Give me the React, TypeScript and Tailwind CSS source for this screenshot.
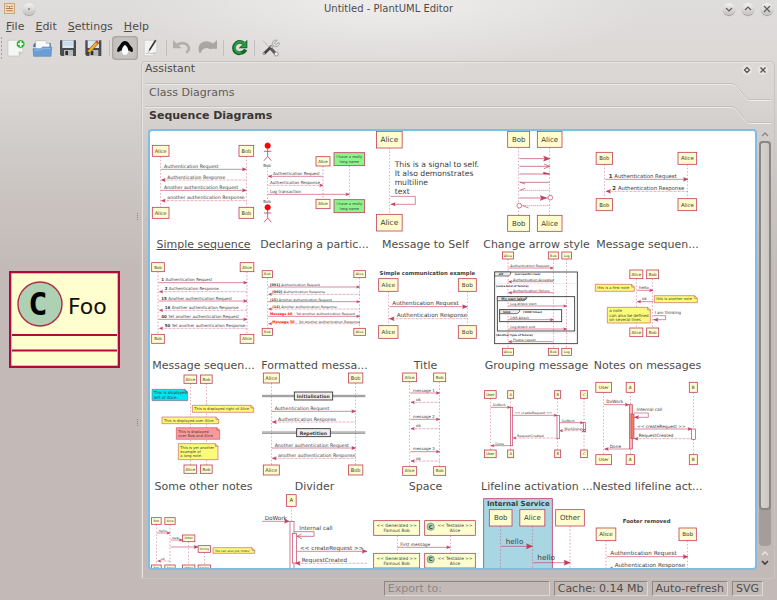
import type { ReactNode } from 'react';

const LINE = '#c23a5e';
const BOX = '#fefece';

interface BoxProps {
  cx: number;
  y: number;
  w: number;
  h: number;
  t: string | string[];
  s: number;
  fill?: string;
}

// A participant head or foot, text centred on cx
function Box({ cx, y, w, h, t, s, fill = BOX }: BoxProps) {
  const lines = Array.isArray(t) ? t : [t];
  const first = y + h / 2 + s * 0.36 - ((lines.length - 1) * s * 1.16) / 2;
  return (
    <g>
      <rect x={cx - w / 2} y={y} width={w} height={h} fill={fill} stroke={LINE} strokeWidth={2.4} />
      {lines.map((l, i) => (
        <text key={l} x={cx} y={first + i * s * 1.16} fontSize={s} textAnchor="middle">
          {l}
        </text>
      ))}
    </g>
  );
}

function Life({ x, a, b }: { x: number; a: number; b: number }) {
  return <path d={`M${x} ${a}V${b}`} stroke={LINE} strokeWidth={1.8} strokeDasharray="5 5" opacity={0.75} />;
}

interface PartProps {
  cx: number;
  w: number;
  h: number;
  top: number;
  bot?: number;
  t: string | string[];
  s: number;
  fill?: string;
}

function Part({ cx, w, h, top, bot, t, s, fill }: PartProps) {
  return (
    <g>
      <Life x={cx} a={top + h} b={bot ?? 610} />
      <Box cx={cx} y={top} w={w} h={h} t={t} s={s} fill={fill} />
      {bot !== undefined && <Box cx={cx} y={bot} w={w} h={h} t={t} s={s} fill={fill} />}
    </g>
  );
}

interface MsgProps {
  a: number;
  b: number;
  y: number;
  t?: string;
  n?: string;
  tx?: number;
  s?: number;
  dash?: boolean;
  red?: boolean;
}

function Msg({ a, b, y, t, n, tx = 0, s = 14, dash, red }: MsgProps) {
  const d = b > a ? -1 : 1;
  const k = Math.max(9, s * 0.85);
  return (
    <g>
      <path d={`M${a} ${y}H${b}`} stroke={LINE} strokeWidth={1.8} strokeDasharray={dash ? '2 2' : undefined} />
      <path d={`M${b} ${y}l${d * k} ${-k / 2.4}l${-d * 2} ${k / 2.4}l${d * 2} ${k / 2.4}z`} fill={LINE} stroke={LINE} />
      <text x={tx} y={y - s * 0.32} fontSize={s}>
        {n && (
          <tspan fontWeight="bold" fill={red ? '#f00' : undefined}>
            {n}{' '}
          </tspan>
        )}
        {t}
      </text>
    </g>
  );
}

function Self({ x, y, w, h }: { x: number; y: number; w: number; h: number }) {
  return (
    <g>
      <path d={`M${x} ${y}h${w}v${h}H${x}`} fill="none" stroke={LINE} strokeWidth={1.8} />
      <path d={`M${x} ${y + h}l15 -6l-3 6l3 6z`} fill={LINE} />
    </g>
  );
}

interface NoteProps {
  x: number;
  y: number;
  w: number;
  h: number;
  t: string[];
  s: number;
  fill?: string;
}

function Note({ x, y, w, h, t, s, fill = '#fbfb77' }: NoteProps) {
  return (
    <g>
      <path d={`M${x} ${y}h${w - 8}l8 8v${h - 8}h${-w}z`} fill={fill} stroke={LINE} strokeWidth={1.6} />
      <path d={`M${x + w - 8} ${y}v8h8`} fill="none" stroke={LINE} strokeWidth={1.6} />
      {t.map((l, i) => (
        <text key={l} x={x + 6} y={y + h / 2 + s * 0.36 + (i - (t.length - 1) / 2) * s * 1.16} fontSize={s}>
          {l}
        </text>
      ))}
    </g>
  );
}

function Bar({ x, y, h, w = 9, fill = '#fff' }: { x: number; y: number; h: number; w?: number; fill?: string }) {
  return <rect x={x} y={y} width={w} height={h} fill={fill} stroke={LINE} strokeWidth={2} />;
}

function Actor({ x, y }: { x: number; y: number }) {
  return (
    <g stroke={LINE} strokeWidth={2.4} fill="none">
      <path d={`M${x} ${y + 8}v24M${x - 11} ${y + 17}h22M${x - 11} ${y + 45}l11 -13l11 13`} />
      <circle cx={x} cy={y} r={8} fill="#f00" stroke="#e00020" />
    </g>
  );
}

const simple = (
  <>
    <Part cx={38} w={50} h={33} top={46} bot={232} t="Alice" s={15} />
    <Part cx={295} w={44} h={33} top={46} bot={232} t="Bob" s={15} />
    <Msg a={38} b={295} y={118} t="Authentication Request" tx={48} />
    <Msg a={295} b={40} y={150} t="Authentication Response" tx={58} dash />
    <Msg a={38} b={295} y={181} t="Another authentication Request" tx={48} />
    <Msg a={295} b={40} y={212} t="another authentication Response" tx={58} dash />
  </>
);

const declaring = (
  <>
    <Life x={359} a={112} b={212} />
    <Actor x={359} y={47} />
    <text x={357} y={110} fontSize={12} textAnchor="middle">Bob</text>
    <text x={357} y={220} fontSize={12} textAnchor="middle">Bob</text>
    <Actor x={359} y={232} />
    <Part cx={525} w={42} h={28} top={80} bot={208} t="Alice" s={12} />
    <Part cx={604} w={92} h={39} top={68} bot={209} t={['I have a really', 'long name']} s={11} fill="#8df48b" />
    <Msg a={525} b={361} y={139} t="Authentication Request" tx={375} s={12} />
    <Msg a={359} b={525} y={166} t="Authentication Response" tx={366} s={12} dash />
    <Msg a={359} b={604} y={193} t="Log transaction" tx={366} s={12} />
  </>
);

const toSelf = (
  <>
    <Part cx={64} w={77} h={50} top={4} bot={253} t="Alice" s={22} />
    {['This is a signal to self.', 'It also demonstrates', 'multiline', 'text'].map((l, i) => (
      <text key={l} x={80} y={111 + i * 27} fontSize={23}>{l}</text>
    ))}
    <Self x={68} y={199} w={74} h={24} />
  </>
);

const arrows = (
  <>
    <Part cx={452} w={66} h={48} top={4} bot={256} t="Bob" s={21} />
    <Part cx={545} w={74} h={48} top={4} bot={256} t="Alice" s={21} />
    <g stroke={LINE} strokeWidth={2} fill="none">
      <path d="M454 86H545M454 109H545M454 132H545M454 157H545M454 204H540" />
      <path d="M528 102l17 7l-17 7M456 157l16 5M456 181l16 -6M464 227l18 7" />
      <path d="M454 181H545M460 227H545" strokeDasharray="3 3" />
      <path d="M545 86l-18 -7l4 7l-4 7zM545 132l-18 -5v5zM535 204l-18 -7l4 7l-4 7z" fill={LINE} />
      <circle cx={547} cy={203} r={7} fill="#fff" />
      <circle cx={454} cy={227} r={7} fill="#fff" />
    </g>
  </>
);

const seqNumber = (
  <>
    <Part cx={49} w={49} h={36} top={67} bot={206} t="Bob" s={16} />
    <Part cx={298} w={56} h={36} top={67} bot={206} t="Alice" s={16} />
    <Msg a={52} b={300} y={148} n="1" t="Authentication Request" tx={62} s={16} />
    <Msg a={300} b={54} y={184} n="2" t="Authentication Response" tx={73} s={16} dash />
  </>
);

const seqStep = (
  <>
    <Part cx={30} w={38} h={27} top={38} bot={253} t="Bob" s={12} />
    <Part cx={297} w={41} h={27} top={38} bot={253} t="Alice" s={12} />
    <Msg a={32} b={297} y={98} n="1" t="Authentication Request" tx={40} s={12} />
    <Msg a={297} b={34} y={125} n="2" t="Authentication Response" tx={50} s={12} dash />
    <Msg a={32} b={297} y={153} n="15" t="Another authentication Request" tx={40} s={12} />
    <Msg a={297} b={34} y={181} n="16" t="Another authentication Response" tx={50} s={12} dash />
    <Msg a={32} b={297} y={208} n="40" t="Yet another authentication Request" tx={40} s={12} />
    <Msg a={297} b={34} y={235} n="50" t="Yet another authentication Response" tx={50} s={12} dash />
  </>
);

const formatted = (
  <>
    <Part cx={358} w={31} h={21} top={62} bot={235} t="Bob" s={10} />
    <Part cx={635} w={35} h={21} top={62} bot={235} t="Alice" s={10} />
    <Msg a={360} b={635} y={111} n="[001]" t="Authentication Request" tx={366} s={10} />
    <Msg a={635} b={362} y={133} n="[002]" t="Authentication Response" tx={373} s={10} dash />
    <Msg a={360} b={635} y={155} n="(15)" t="Another authentication Request" tx={366} s={10} />
    <Msg a={635} b={362} y={177} n="(16)" t="Another authentication Response" tx={373} s={10} dash />
    <Msg a={360} b={635} y={199} n="Message 40" tx={366} s={10} red />
    <text x={445} y={196} fontSize={10}>Yet another authentication Request</text>
    <Msg a={635} b={362} y={221} n="Message 50" tx={373} s={10} dash red />
    <text x={452} y={218} fontSize={10}>Yet another authentication Response</text>
  </>
);

const titled = (
  <>
    <text x={178} y={75} fontSize={16} fontWeight="bold" textAnchor="middle">Simple communication example</text>
    <Part cx={61} w={58} h={38} top={86} bot={227} t="Alice" s={17} />
    <Part cx={298} w={54} h={38} top={86} bot={227} t="Bob" s={17} />
    <Msg a={64} b={298} y={170} t="Authentication Request" tx={73} s={17} />
    <Msg a={298} b={64} y={206} t="Authentication Response" tx={86} s={17} dash />
  </>
);

const grouping = (
  <>
    <Part cx={420} w={33} h={21} top={6} bot={295} t="Alice" s={10} />
    <Part cx={556} w={30} h={21} top={6} bot={295} t="Bob" s={10} />
    <Part cx={596} w={29} h={21} top={6} bot={295} t="Log" s={10} />
    <g fill="none" stroke="#333" strokeWidth={2.6}>
      <rect x={380} y={66} width={248} height={215} />
      <rect x={388} y={140} width={232} height={103} />
      <rect x={395} y={179} width={186} height={36} />
      <path d="M380 78h42l6 -6v-6h-48zM388 152h80l8 -6v-6h-88zM395 191h52l8 -6v-6h-60z" fill="#ececec" strokeWidth={2} />
      <path d="M380 101h248M380 249h248" stroke="#888" strokeWidth={1} strokeDasharray="3 3" />
    </g>
    <g fontSize={9} fontWeight="bold">
      <text x={392} y={76}>alt</text>
      <text x={440} y={76} fontSize={8}>[successful case]</text>
      <text x={384} y={110} fontSize={8}>[some kind of failure]</text>
      <text x={400} y={150} fontSize={10}>My own label</text>
      <text x={405} y={189}>loop</text>
      <text x={465} y={189} fontSize={8}>[1000 times]</text>
      <text x={384} y={257} fontSize={8}>[Another type of failure]</text>
    </g>
    <Msg a={421} b={556} y={54} t="Authentication Request" tx={427} s={10} />
    <Msg a={556} b={422} y={95} t="Authentication Accepted" tx={435} s={10} />
    <Msg a={556} b={422} y={128} t="Authentication Failure" tx={435} s={10} />
    <Msg a={421} b={596} y={168} t="Log attack start" tx={427} s={10} />
    <Msg a={421} b={556} y={209} t="DNS Attack" tx={427} s={10} />
    <Msg a={421} b={596} y={237} t="Log attack end" tx={427} s={10} />
    <Msg a={556} b={422} y={275} t="Please repeat" tx={435} s={10} />
  </>
);

const notes = (
  <>
    <Part cx={145} w={39} h={26} top={60} bot={234} t="Alice" s={12} />
    <Part cx={194} w={36} h={26} top={60} bot={234} t="Bob" s={12} />
    <Note x={22} y={103} w={117} h={21} t={['this is a first note']} s={11} />
    <Note x={199} y={137} w={129} h={21} t={['this is another note']} s={11} />
    <Note x={58} y={172} w={129} h={47} t={['a note', 'can also be defined', 'on several lines']} s={12} />
    <Msg a={147} b={195} y={121} t="hello" tx={153} s={12} />
    <Msg a={196} b={148} y={155} t="ok" tx={162} s={12} />
    <text x={200} y={193} fontSize={12}>I am thinking</text>
    <Self x={196} y={197} w={37} h={12} />
  </>
);

const otherNotes = (
  <>
    <Part cx={127} w={38} h={25} top={15} bot={285} t="Alice" s={12} />
    <Part cx={175} w={35} h={25} top={15} bot={285} t="Bob" s={12} />
    <Note x={12} y={58} w={107} h={34} t={['This is displayed', 'left of Alice.']} s={12} fill="#00e5f5" />
    <Note x={133} y={106} w={184} h={21} t={['This is displayed right of Alice.']} s={11} />
    <Note x={42} y={141} w={170} h={20} t={['This is displayed over Alice.']} s={11} />
    <Note x={85} y={173} w={130} h={35} t={[' This is displayed', ' over Bob and Alice.']} s={11} fill="#fa9a9a" />
    <Note x={91} y={221} w={119} h={48} t={['This is yet another', 'example of', 'a long note.']} s={11} />
  </>
);

const divider = (
  <>
    <Part cx={370} w={48} h={30} top={9} bot={285} t="Alice" s={15} />
    <Part cx={623} w={43} h={30} top={9} bot={285} t="Bob" s={15} />
    <path d="M342 76H652M342 80H652M342 186H652M342 190H652" stroke="#444" strokeWidth={1.8} />
    <g fill="#eee" stroke="#333" strokeWidth={2.6}>
      <rect x={439} y={66} width={115} height={24} />
      <rect x={446} y={176} width={101} height={24} />
    </g>
    <g fontSize={14} fontWeight="bold" textAnchor="middle">
      <text x={496} y={84}>Initialisation</text>
      <text x={496} y={194}>Repetition</text>
    </g>
    <Msg a={371} b={623} y={124} t="Authentication Request" tx={380} />
    <Msg a={623} b={373} y={156} t="Authentication Response" tx={390} dash />
    <Msg a={371} b={623} y={234} t="Another authentication Request" tx={380} />
    <Msg a={623} b={373} y={265} t="another authentication Response" tx={390} dash />
  </>
);

const space = (
  <>
    <Part cx={125} w={42} h={26} top={9} bot={290} t="Alice" s={12} />
    <Part cx={215} w={36} h={26} top={9} bot={290} t="Bob" s={12} />
    {[69, 148, 245].map((y, i) => (
      <g key={y}>
        <Msg a={127} b={215} y={y} t={`message ${i + 1}`} tx={135} s={12} />
        <Msg a={215} b={129} y={y + 28} t="ok" tx={144} s={12} dash />
      </g>
    ))}
  </>
);

const lifeline = (
  <>
    <Part cx={367} w={35} h={23} top={62} bot={240} t="User" s={11} />
    <Part cx={428} w={18} h={23} top={62} bot={240} t="A" s={11} />
    <Part cx={569} w={18} h={23} top={62} bot={240} t="B" s={11} />
    <Part cx={648} w={20} h={23} top={62} bot={240} t="C" s={11} />
    <Bar x={427} y={112} h={115} w={7} />
    <Bar x={567} y={136} h={70} w={7} />
    <Bar x={646} y={158} h={26} w={7} />
    <Msg a={368} b={427} y={112} t="DoWork" tx={374} s={10} />
    <Msg a={434} b={567} y={136} t="<< createRequest >>" tx={440} s={10} />
    <Msg a={574} b={646} y={158} t="DoWork" tx={581} s={10} />
    <Msg a={646} b={575} y={182} t="WorkDone" tx={589} s={10} dash />
    <Msg a={567} b={435} y={204} t="RequestCreated" tx={447} s={10} dash />
    <Msg a={427} b={369} y={227} t="Done" tx={382} s={10} />
    <path d="M641 175l12 12M653 175l-12 12" stroke={LINE} strokeWidth={2.6} />
  </>
);

const nested = (
  <>
    <Part cx={47} w={47} h={30} top={37} bot={254} t="User" s={13} />
    <Part cx={127} w={25} h={30} top={37} bot={254} t="A" s={13} />
    <Part cx={316} w={24} h={30} top={37} bot={254} t="B" s={13} />
    <Bar x={124} y={104} h={133} fill="#ffb9b0" />
    <Bar x={129} y={132} h={74} fill="#e9835e" />
    <Bar x={311} y={177} h={31} w={11} />
    <Msg a={48} b={123} y={104} t="DoWork" tx={55} s={13} />
    <text x={146} y={124} fontSize={13}>Internal call</text>
    <Self x={138} y={129} w={43} h={13} />
    <Msg a={138} b={311} y={177} t="<< createRequest >>" tx={147} s={13} />
    <Msg a={311} b={139} y={206} t="RequestCreated" tx={152} s={13} dash />
    <Msg a={123} b={50} y={237} t="Done" tx={65} s={13} />
  </>
);

const creation = (
  <>
    <Part cx={25} w={29} h={20} top={443} bot={585} t="Bob" s={9} />
    <Part cx={66} w={31} h={20} top={443} bot={585} t="Alice" s={9} />
    <Part cx={122} w={37} h={20} top={495} bot={585} t="Other" s={9} />
    <Part cx={169} w={37} h={20} top={527} bot={585} t="String" s={9} />
    <Note x={195} y={533} w={125} h={17} t={['You can also put notes!']} s={9} />
    <Msg a={27} b={66} y={489} t="hello" tx={32} s={10} />
    <Msg a={68} b={103} y={510} t="new" tx={72} s={10} />
    <Msg a={68} b={150} y={531} />
    <Msg a={66} b={29} y={573} t="ok" tx={39} s={10} dash />
  </>
);

const internalCall = (
  <>
    <Part cx={430} w={29} h={35} top={374} t="A" s={16} />
    <Bar x={426} y={454} h={160} w={12} />
    <Bar x={433} y={490} h={89} w={12} />
    <Msg a={342} b={424} y={454} t="DoWork" tx={350} s={17} />
    <text x={454} y={479} fontSize={17}>Internal call</text>
    <path d="M438 485H498V499H447M461 492l-14 7l14 7" fill="none" stroke={LINE} strokeWidth={2} />
    <Msg a={447} b={657} y={544} t="<< createRequest >>" tx={456} s={17} />
    <Msg a={657} b={442} y={580} t="RequestCreated" tx={461} s={17} dash />
  </>
);

const stereotypes = (
  <>
    <Life x={88} a={497} b={550} />
    <Life x={247} a={497} b={550} />
    {[452, 550].map((y) => (
      <g key={y}>
        <Box cx={86} y={y} w={138} h={44} t={['<< Generated >>', 'Famous Bob']} s={13} />
        <Box cx={246} y={y} w={152} h={44} t="" s={13} />
        <text x={261} y={y + 20} fontSize={13} textAnchor="middle">{'<< Testable >>'}</text>
        <text x={261} y={y + 35} fontSize={13} textAnchor="middle">Alice</text>
        <circle cx={188} cy={y + 18} r={11} fill="#add1b2" stroke="#555" strokeWidth={1.5} />
        <text x={188} y={y + 24} fontSize={16} fontWeight="bold" textAnchor="middle">C</text>
      </g>
    ))}
    <Msg a={88} b={247} y={532} t="First message" tx={97} s={13} />
  </>
);

const boxed = (
  <>
    <rect x={347} y={386} width={206} height={230} fill="#a8d6e3" stroke={LINE} strokeWidth={2.4} />
    <text x={451} y={408} fontSize={21} fontWeight="bold" textAnchor="middle">Internal Service</text>
    <Part cx={398} w={68} h={49} top={419} t="Bob" s={21} />
    <Part cx={493} w={75} h={49} top={419} t="Alice" s={21} />
    <Part cx={606} w={86} h={49} top={419} t="Other" s={21} />
    <Msg a={400} b={494} y={529} t="hello" tx={413} s={22} />
    <Msg a={496} b={607} y={578} t="hello" tx={508} s={22} />
  </>
);

const footer = (
  <>
    <text x={176} y={459} fontSize={16} fontWeight="bold" textAnchor="middle">Footer removed</text>
    <Part cx={54} w={59} h={38} top={474} t="Alice" s={17} />
    <Part cx={299} w={52} h={38} top={474} t="Bob" s={17} />
    <Msg a={57} b={300} y={560} t="Authentication Request" tx={67} s={17} />
    <Msg a={300} b={59} y={597} t="Authentication Response" tx={80} s={17} dash />
  </>
);

interface Template {
  label?: string;
  view: string;
  drawing: ReactNode;
}

const templates: Template[] = [
  { label: 'Simple sequence', view: '0 3 333 315', drawing: simple },
  { label: 'Declaring a partic...', view: '333 3 333 315', drawing: declaring },
  { label: 'Message to Self', view: '6 3 333 315', drawing: toSelf },
  { label: 'Change arrow style', view: '339 3 333 315', drawing: arrows },
  { label: 'Message sequen...', view: '12 3 333 315', drawing: seqNumber },
  { label: 'Message sequen...', view: '0 6 333 315', drawing: seqStep },
  { label: 'Formatted messa...', view: '333 6 333 315', drawing: formatted },
  { label: 'Title', view: '6 6 333 315', drawing: titled },
  { label: 'Grouping message', view: '339 6 333 315', drawing: grouping },
  { label: 'Notes on messages', view: '12 6 333 315', drawing: notes },
  { label: 'Some other notes', view: '0 9 333 315', drawing: otherNotes },
  { label: 'Divider', view: '333 9 333 315', drawing: divider },
  { label: 'Space', view: '6 9 333 315', drawing: space },
  { label: 'Lifeline activation ...', view: '339 9 333 315', drawing: lifeline },
  { label: 'Nested lifeline act...', view: '12 9 333 315', drawing: nested },
  { view: '0 372 333 315', drawing: creation },
  { view: '333 372 333 315', drawing: internalCall },
  { view: '6 372 333 315', drawing: stereotypes },
  { view: '339 372 333 315', drawing: boxed },
  { view: '12 372 333 315', drawing: footer },
];

const icons: Record<string, ReactNode> = {
  new: (
    <>
      <path d="M24 121h44v36l-12 11H24z" fill="#f6f6f5" stroke="#b9b7b5" strokeWidth={1.5} />
      <path d="M56 168q2 -9 -1 -14q7 3 13 2z" fill="#c9c7c5" />
      <circle cx={62} cy={132} r={13} fill="#2fae36" stroke="#e7f6e4" strokeWidth={2} />
      <path d="M62 124v16M54 132h16" stroke="#fff" strokeWidth={5} />
    </>
  ),
  open: (
    <>
      <path d="M100 136l4 -7h48v12h-52z" fill="#3c6fa8" />
      <path d="M107 122h30l12 10v20h-42z" fill="#fafafa" stroke="#aaa" strokeWidth={1.5} />
      <path d="M137 122v10h12z" fill="#cfcfcf" />
      <path d="M99 146h23l6 -5h27l-2 28h-52z" fill="#6c9ed6" stroke="#3f73b0" strokeWidth={1.5} />
      <path d="M102 150h21l6 -5h22" fill="none" stroke="#a8caee" strokeWidth={2} />
    </>
  ),
  save: (
    <>
      <path d="M180 121h48v47h-44l-4 -4z" fill="#4a4c50" />
      <path d="M187 121h34v23h-34z" fill="#dbe8f3" />
      <path d="M190 128h28M190 134h28" stroke="#b5c6d5" strokeWidth={2} />
      <path d="M192 150h27v18h-27z" fill="#b9bcbf" />
      <path d="M196 153h8v12h-8z" fill="#2a2b2d" />
    </>
  ),
  saveAs: (
    <>
      <path d="M256 121h48v47h-44l-4 -4z" fill="#4a4c50" />
      <path d="M263 121h34v23h-34z" fill="#dbe8f3" />
      <path d="M268 150h27v18h-27z" fill="#b9bcbf" />
      <path d="M272 153h8v12h-8z" fill="#2a2b2d" />
      <path d="M260 163l4 -12l25 -27l7 6l-26 28z" fill="#f0ae2b" stroke="#6d4511" strokeWidth={1.8} />
      <path d="M286 126l4 -5l7 6l-4 5z" fill="#cf4a35" />
      <path d="M260 163l3 -9l6 5z" fill="#332" />
    </>
  ),
  assistant: (
    <>
      <path d="M351 153q2 -12 9 -18q6 -12 15 -12t15 12q8 6 9 18q-3 5 -8 1q-3 -3 -6 -2q-9 8 -20 0q-3 -1 -6 2q-5 4 -8 -1z" fill="#0a0a0a" />
      <path d="M375 134q-10 8 -10 20q2 11 10 11t10 -11q0 -12 -10 -20z" fill="#fff" />
    </>
  ),
  edit: (
    <>
      <path d="M433 121h37v36l-10 10h-27z" fill="#f3f3f2" stroke="#c3c1bf" strokeWidth={1.5} />
      <path d="M460 167l1 -11l9 1z" fill="#cfccca" />
      <path d="M445 155l3 -9l17 -27l4 3l-16 26z" fill="#353535" />
      <path d="M438 161q9 -4 13 -1t10 -1" fill="none" stroke="#8a8a8a" strokeWidth={1.6} />
    </>
  ),
  undo: (
    <>
      <path d="M528 136q20 -12 33 -2q13 12 -2 24" fill="none" stroke="#b1aeac" strokeWidth={8} />
      <path d="M519 120v25h26z" fill="#b1aeac" />
    </>
  ),
  redo: (
    <>
      <path d="M641 137q-20 -12 -33 -4q-12 8 -7 25q8 -16 22 -14q6 0 10 3z" fill="#a8a5a3" />
      <path d="M601 158q-7 -22 9 -29q14 -6 30 6" fill="none" stroke="#a8a5a3" strokeWidth={7} />
      <path d="M651 120v26h-27z" fill="#a8a5a3" />
    </>
  ),
  refresh: (
    <>
      <path d="M731 130q-11 -8 -22 -1q-10 9 -6 22q9 13 23 7q8 -3 11 -9" fill="none" stroke="#14672a" strokeWidth={11} />
      <path d="M742 119v26h-26z" fill="#14672a" />
      <path d="M731 130q-11 -7 -21 -1q-8 8 -5 20q7 12 19 8" fill="none" stroke="#2e9c46" strokeWidth={6} />
      <path d="M739 125v17h-17z" fill="#2e9c46" />
    </>
  ),
  settings: (
    <>
      <path d="M789 122l30 31" stroke="#b9b9b7" strokeWidth={3} />
      <path d="M813 146l14 15" stroke="#5b5b5a" strokeWidth={9} strokeLinecap="round" />
      <path d="M792 161l23 -22" stroke="#444" strokeWidth={8} strokeLinecap="round" />
      <path d="M812 143l10 -10" stroke="#c9c9c7" strokeWidth={6} />
      <path d="M832 121q-8 -3 -13 3q-4 7 0 13q7 5 14 2q7 -5 4 -12l-9 7l-5 -5z" fill="#dededc" stroke="#777" strokeWidth={1.6} />
      <circle cx={829} cy={162} r={6} fill="#efefed" stroke="#777" strokeWidth={2} />
      <circle cx={792} cy={161} r={3} fill="#ccc" />
    </>
  ),
};

const toolbar: { id: string; title: string; view: string }[][] = [
  [
    { id: 'new', title: 'New', view: '9 108 78 72' },
    { id: 'open', title: 'Open', view: '87 108 78 72' },
    { id: 'save', title: 'Save', view: '165 108 78 72' },
    { id: 'saveAs', title: 'Save As', view: '243 108 78 72' },
  ],
  [
    { id: 'assistant', title: 'Assistant', view: '336 108 78 72' },
    { id: 'edit', title: 'Editor', view: '414 108 78 72' },
  ],
  [
    { id: 'undo', title: 'Undo', view: '507 108 78 72' },
    { id: 'redo', title: 'Redo', view: '585 108 78 72' },
  ],
  [{ id: 'refresh', title: 'Refresh', view: '678 108 78 72' }],
  [{ id: 'settings', title: 'Preferences', view: '771 108 78 72' }],
];

function RoundButton({ title, d }: { title: string; d: string }) {
  return (
    <button
      aria-label={title}
      className="h-3 w-3 rounded-full bg-linear-to-b from-[#f4f3f2] to-[#c4c1bf] shadow-[0_1px_1px_0_#9f9b99]"
    >
      <svg viewBox="0 0 12 12" className="h-3 w-3" fill="none" stroke="#5f5c5a" strokeWidth={1.2}>
        <path d={d} />
      </svg>
    </button>
  );
}

function Tab({ title, active }: { title: string; active?: boolean }) {
  return (
    <button className="flex h-[23px] w-full text-left">
      <span
        className={`h-full flex-1 border-t border-[#c6c1bf] pl-1 leading-[17px] shadow-[inset_0_1px_0_#ebe9e8] ${
          active ? 'font-bold text-[#3a3735]' : 'text-[#5f5b59]'
        }`}
      >
        {title}
      </span>
      <svg viewBox="0 0 40 23" className="h-[23px] w-10" fill="none">
        <path d="M0 1.5q4 0 7 4l7 9q2 3 6 3h20" stroke="#efedec" />
        <path d="M0 .5q4 0 7 4l7 9q2 3 6 3h20" stroke="#c6c1bf" />
      </svg>
    </button>
  );
}

const sunken = 'h-[15px] border border-t-[#8d8684] border-l-[#8d8684] border-r-[#ddd9d7] border-b-[#ddd9d7] leading-[13px]';

export default function App() {
  return (
    <div className="flex h-screen flex-col overflow-hidden bg-[radial-gradient(ellipse_260px_70px_at_50%_0,#efeeed,transparent),linear-gradient(#dfdddc_0,#dad6d4_90px,#cfcbc8_150px,#c3bab7_270px)] font-['DejaVu_Sans',sans-serif] text-[11px] text-[#504c4a]">
      <header className="grid h-[17px] shrink-0 grid-cols-[1fr_auto_1fr] items-center">
        <div className="flex items-center gap-2 pl-1">
          <svg viewBox="0 0 10 10" className="h-[11px] w-[11px]">
            <rect x={0.5} y={0.5} width={9} height={9} fill="#f3e3b8" stroke="#c9a582" />
            <path d="M2 3h2M6 3h2M3 5h5M2 7h5" stroke="#c46a52" />
            <path d="M5 3v1M2 5h1M7 7h1" stroke="#47803b" />
          </svg>
          <RoundButton title="Window menu" d="M5 6h2" />
        </div>
        <h1 className="text-[10px]">Untitled - PlantUML Editor</h1>
        <div className="flex justify-end gap-[7px] pr-1">
          <RoundButton title="Minimize" d="M3 5l3 3l3-3" />
          <RoundButton title="Maximize" d="M3 7l3-3l3 3" />
          <RoundButton title="Close" d="M3 3l6 6M9 3l-6 6" />
        </div>
      </header>

      <nav className="flex h-[19px] shrink-0 items-center gap-[11px] pt-0.5 pl-1.5">
        {['File', 'Edit', 'Settings', 'Help'].map((m) => (
          <button key={m}>
            <span className="underline">{m[0]}</span>
            {m.slice(1)}
          </button>
        ))}
      </nav>

      <div className="flex h-6 shrink-0">
        <div className="w-[3px] bg-[radial-gradient(#a5a09e_1px,transparent_1px)] bg-[size:3px_4px]" />
        {toolbar.map((group, i) => (
          <div key={i} className="flex">
            {i > 0 && <div className="mx-0.5 my-1 w-px bg-[#c3bfbd]" />}
            {group.map((b) => (
              <button
                key={b.id}
                aria-label={b.title}
                className={
                  b.id === 'assistant'
                    ? 'rounded-sm bg-[#c6c2c0] shadow-[inset_0_0_2px_1px_#a09c9a]'
                    : ''
                }
              >
                <svg viewBox={b.view} className="h-6 w-[26px]">
                  {icons[b.id]}
                </svg>
              </button>
            ))}
          </div>
        ))}
      </div>

      <div className="flex min-h-0 flex-1">
        <section className="flex w-[129px] shrink-0 items-center justify-center">
          <svg viewBox="0 0 111 97" className="h-[97px] w-[111px]">
            <rect x={1} y={1} width={109} height={95} fill={BOX} stroke="#b3093f" strokeWidth={2.6} />
            <path d="M3 64h105M3 79.500h105" stroke="#b3093f" strokeWidth={2.2} />
            <circle cx={31} cy={33} r={22} fill="#add1b2" stroke="#b02a48" strokeWidth={1.4} />
            <text x={29} y={44} fontSize={32} fontWeight="bold" textAnchor="middle" fill="#000" fontFamily="DejaVu Sans Mono">
              C
            </text>
            <text x={59} y={43} fontSize={22} fill="#111">Foo</text>
          </svg>
        </section>
        <div className="flex w-3 shrink-0 flex-col items-end justify-around py-[53px] pr-[3px]">
          {[0, 1].map((i) => (
            <div key={i} className="h-[7px] border-l border-dotted border-[#8a8482]" />
          ))}
        </div>

        <section className="mt-px mr-0.5 flex min-w-0 flex-1 flex-col rounded-t border border-[#c9c4c2] px-[3px] pb-2 shadow-[inset_1px_1px_0_#e6e3e2]">
          <div className="flex h-[21px] shrink-0 items-center justify-between pr-[3px] pb-1.5">
            <h2>Assistant</h2>
            <div className="flex gap-1.5">
              <button aria-label="Float panel" className="rounded-full bg-[#e8e6e5]">
                <svg viewBox="0 0 10 10" className="h-2.5 w-2.5" fill="none" stroke="#5f5c5a" strokeWidth={1.4}>
                  <path d="M5 2.500l2.500 2.500l-2.500 2.500l-2.500-2.500z" />
                </svg>
              </button>
              <button aria-label="Close panel" className="rounded-full bg-[#e8e6e5]">
                <svg viewBox="0 0 10 10" className="h-2.5 w-2.5" fill="none" stroke="#5f5c5a" strokeWidth={1.5}>
                  <path d="M2.500 2.500l5 5M7.500 2.500l-5 5" />
                </svg>
              </button>
            </div>
          </div>
          <Tab title="Class Diagrams" />
          <Tab title="Sequence Diagrams" active />

          <div className="flex min-h-0 flex-1 pl-[3px]">
            <div className="min-w-0 flex-1 overflow-hidden rounded-sm border-2 border-[#7dbde6] bg-white">
              <ul className="-ml-0.5 flex flex-wrap">
                {templates.map((t, i) => (
                  <li key={i} className="h-[121px] w-[111px] text-center">
                    <svg viewBox={t.view} className="h-[105px] w-[111px] overflow-visible" fill="#3c3c3c">
                      {t.drawing}
                    </svg>
                    {t.label && (
                      <p className={`leading-[18px] whitespace-nowrap ${i === 0 ? 'underline' : ''}`}>{t.label}</p>
                    )}
                  </li>
                ))}
              </ul>
            </div>
            <div className="ml-0.5 flex w-3 shrink-0 flex-col">
              <svg viewBox="0 0 12 12" className="h-3 w-3" fill="none" stroke="#8d8886" strokeWidth={1.4}>
                <path d="M3 7l3-3l3 3" />
              </svg>
              <div className="flex-1 rounded bg-[#a49d9b]">
                <div className="h-[91%] rounded border-2 border-[#8b8583] bg-linear-to-r from-[#d6d2d0] to-[#cbc7c4]" />
              </div>
              <svg viewBox="0 0 12 24" className="h-6 w-3" fill="none" strokeWidth={1.6}>
                <path d="M3 9l3-3l3 3" stroke="#e4e1df" />
                <path d="M3 15l3 3l3-3" stroke="#45413f" />
              </svg>
            </div>
          </div>
        </section>
      </div>

      <footer className="flex h-[21px] shrink-0 items-start justify-end gap-1 pt-0.5 pr-3.5">
        <input
          aria-label="Export to"
          placeholder="Export to:"
          className={`w-[166px] px-[3px] placeholder:text-[#8f8886] ${sunken}`}
        />
        <span className={`px-[3px] ${sunken}`}>Cache: 0.14 Mb</span>
        <span className={`px-[3px] ${sunken}`}>Auto-refresh</span>
        <span className={`px-[3px] ${sunken}`}>SVG</span>
      </footer>
    </div>
  );
}
